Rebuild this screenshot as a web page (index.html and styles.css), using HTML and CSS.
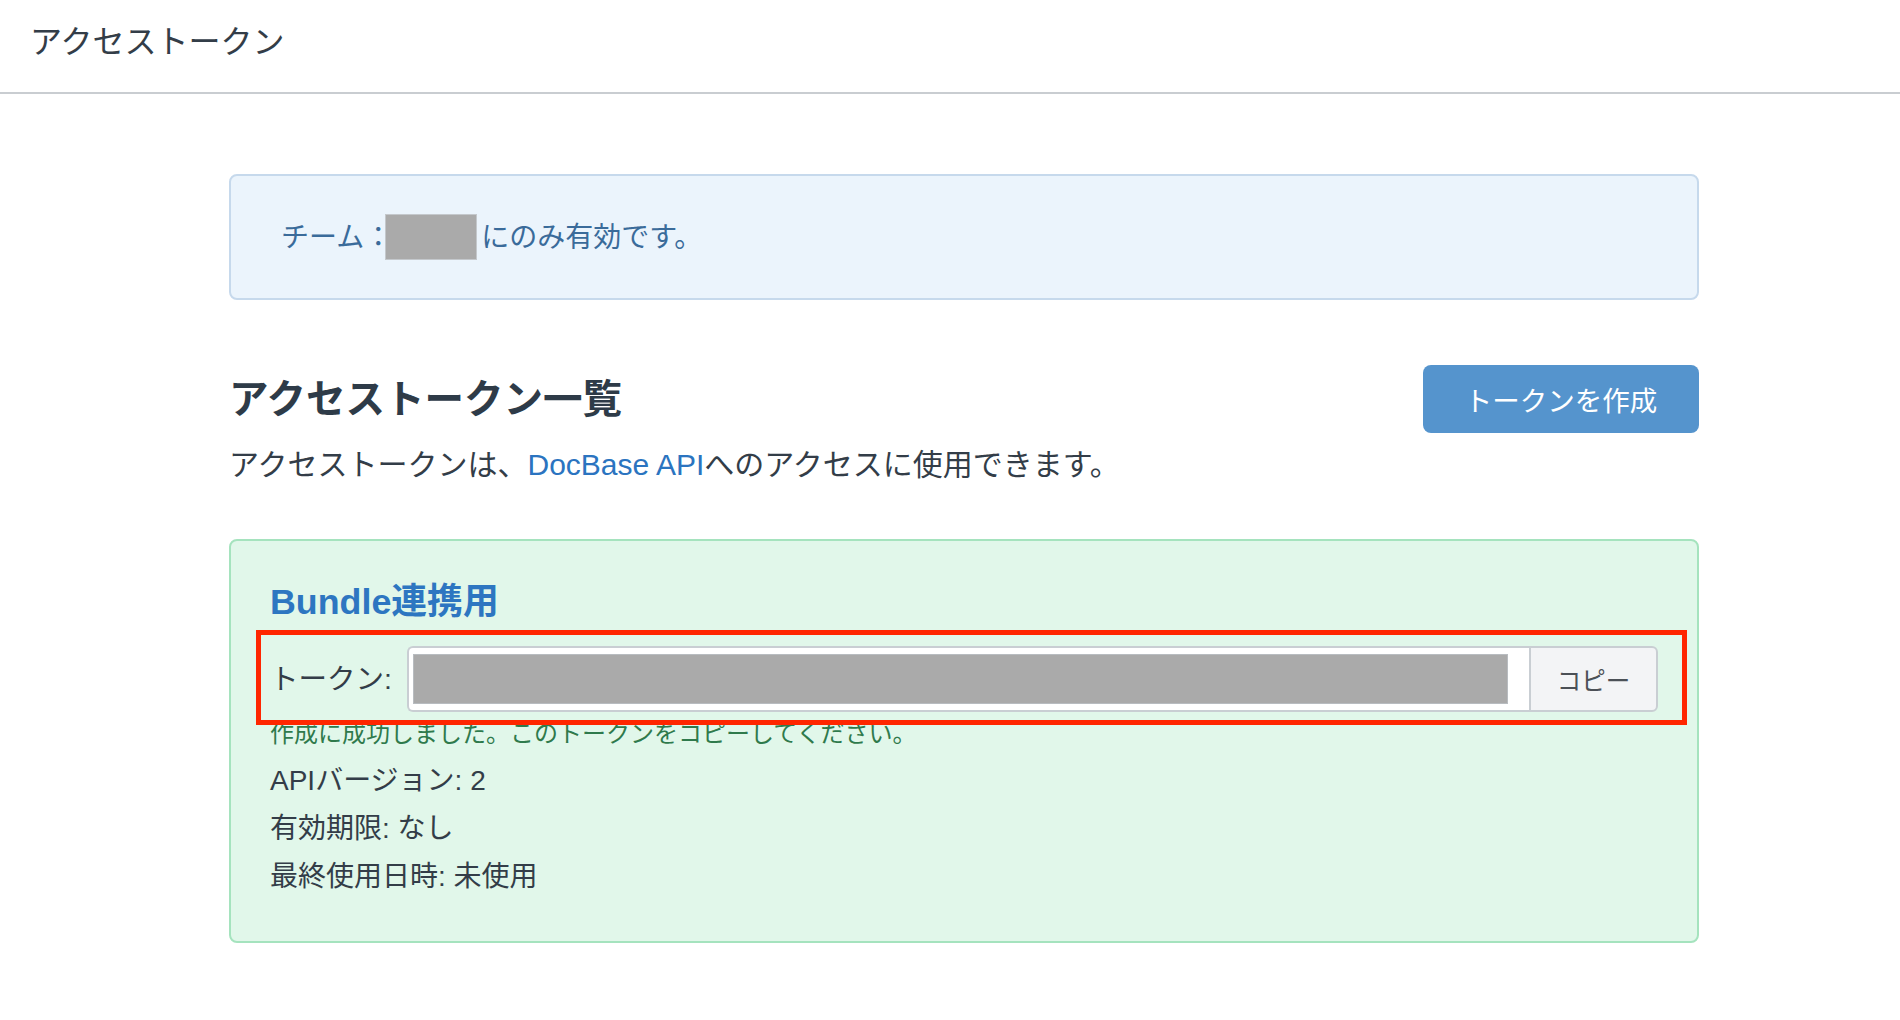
FILE: index.html
```html
<!DOCTYPE html>
<html lang="ja">
<head>
<meta charset="utf-8">
<title>アクセストークン</title>
<link rel="stylesheet" href="styles.css">
</head>
<body>
<header class="topbar">
  <div class="topbar-title">アクセストークン</div>
</header>
<main class="main">
  <div class="info-box">チーム：<span class="mask-team"></span>にのみ有効です。</div>

  <div class="heading-row">
    <h2 class="heading">アクセストークン一覧</h2>
    <button class="btn-create">トークンを作成</button>
  </div>
  <p class="desc">アクセストークンは、<a class="link" href="#">DocBase API</a>へのアクセスに使用できます。</p>

  <section class="token-card">
    <h3 class="token-name">Bundle連携用</h3>
    <div class="token-row">
      <span class="token-label">トークン:</span>
      <div class="input-group">
        <div class="token-input"><span class="mask-token"></span></div>
        <button class="btn-copy">コピー</button>
      </div>
      <div class="highlight"></div>
    </div>
    <p class="success">作成に成功しました。このトークンをコピーしてください。</p>
    <p class="meta">APIバージョン: 2</p>
    <p class="meta">有効期限: なし</p>
    <p class="meta">最終使用日時: 未使用</p>
  </section>
</main>
</body>
</html>
```

FILE: styles.css
```css
* { box-sizing: border-box; }
html, body { margin: 0; padding: 0; background: #ffffff; }
body {
  font-family: "Liberation Sans", "Noto Sans CJK JP", sans-serif;
  color: #333d48;
  width: 1900px;
  height: 1020px;
  overflow: hidden;
}

.topbar {
  height: 94px;
  border-bottom: 2px solid #c9cdd1;
  padding: 21px 0 0 30px;
}
.topbar-title {
  font-size: 32px;
  line-height: 42px;
  color: #333d48;
}

.main {
  width: 1470px;
  margin-left: 229px;
  padding-top: 80px;
}

.info-box {
  background: #ebf4fc;
  border: 2px solid #c6d9ec;
  border-radius: 8px;
  padding: 38px 50px;
  font-size: 28px;
  line-height: 43px;
  color: #3a6b9a;
  display: flex;
  align-items: center;
}
.mask-team {
  display: inline-block;
  width: 92px;
  height: 46px;
  background: #aaaaaa;
  border: 1px solid #c4c8cc;
  margin: 0 4px 0 -7px;
}

.heading-row {
  margin-top: 65px;
  height: 68px;
  display: flex;
  align-items: center;
  justify-content: space-between;
}
.heading {
  margin: 0;
  font-size: 39.5px;
  line-height: 46px;
  font-weight: bold;
  color: #2e3b48;
}
.btn-create {
  width: 276px;
  height: 68px;
  border: none;
  border-radius: 8px;
  background: #5594cd;
  color: #ffffff;
  font-family: inherit;
  font-size: 27.5px;
  padding: 0;
  cursor: pointer;
}

.desc {
  margin: 11px 0 0;
  font-size: 30px;
  line-height: 42px;
  color: #333d48;
}
.link { color: #2b74c0; text-decoration: none; }

.token-card {
  margin-top: 53px;
  background: #e1f7ea;
  border: 2px solid #a5e3be;
  border-radius: 8px;
  padding: 40px 39px 40px 39px;
}
.token-name {
  margin: 0;
  font-size: 35.8px;
  line-height: 42px;
  font-weight: bold;
  color: #2d76c1;
}
.token-row {
  position: relative;
  margin-top: 23px;
  height: 66px;
  display: flex;
  align-items: center;
}
.token-label {
  font-size: 28.5px;
  line-height: 42px;
  color: #333d48;
  width: 137px;
  flex: none;
}
.input-group {
  flex: 1;
  height: 66px;
  display: flex;
}
.token-input {
  flex: 1;
  background: #ffffff;
  border: 2px solid #c9ced3;
  border-right: none;
  border-radius: 6px 0 0 6px;
  padding: 6px 21px 6px 4px;
  display: flex;
}
.mask-token {
  flex: 1;
  background: #aaaaaa;
  border: 1px solid #b8bcc0;
}
.btn-copy {
  width: 129px;
  flex: none;
  background: #f3f4f6;
  border: 2px solid #c9ced3;
  border-radius: 0 6px 6px 0;
  font-family: inherit;
  font-size: 24.5px;
  color: #4b5056;
  padding: 0;
  cursor: pointer;
}
.highlight {
  position: absolute;
  left: -14px;
  right: -29px;
  top: -16px;
  bottom: -13px;
  border: 5px solid #ff2600;
  pointer-events: none;
}

.success {
  margin: 4px 0 0;
  font-size: 24px;
  line-height: 36px;
  color: #2f7a4c;
}
.meta {
  margin: 0;
  font-size: 28px;
  line-height: 48px;
  color: #333d48;
}
.success + .meta { margin-top: 5px; }
```
